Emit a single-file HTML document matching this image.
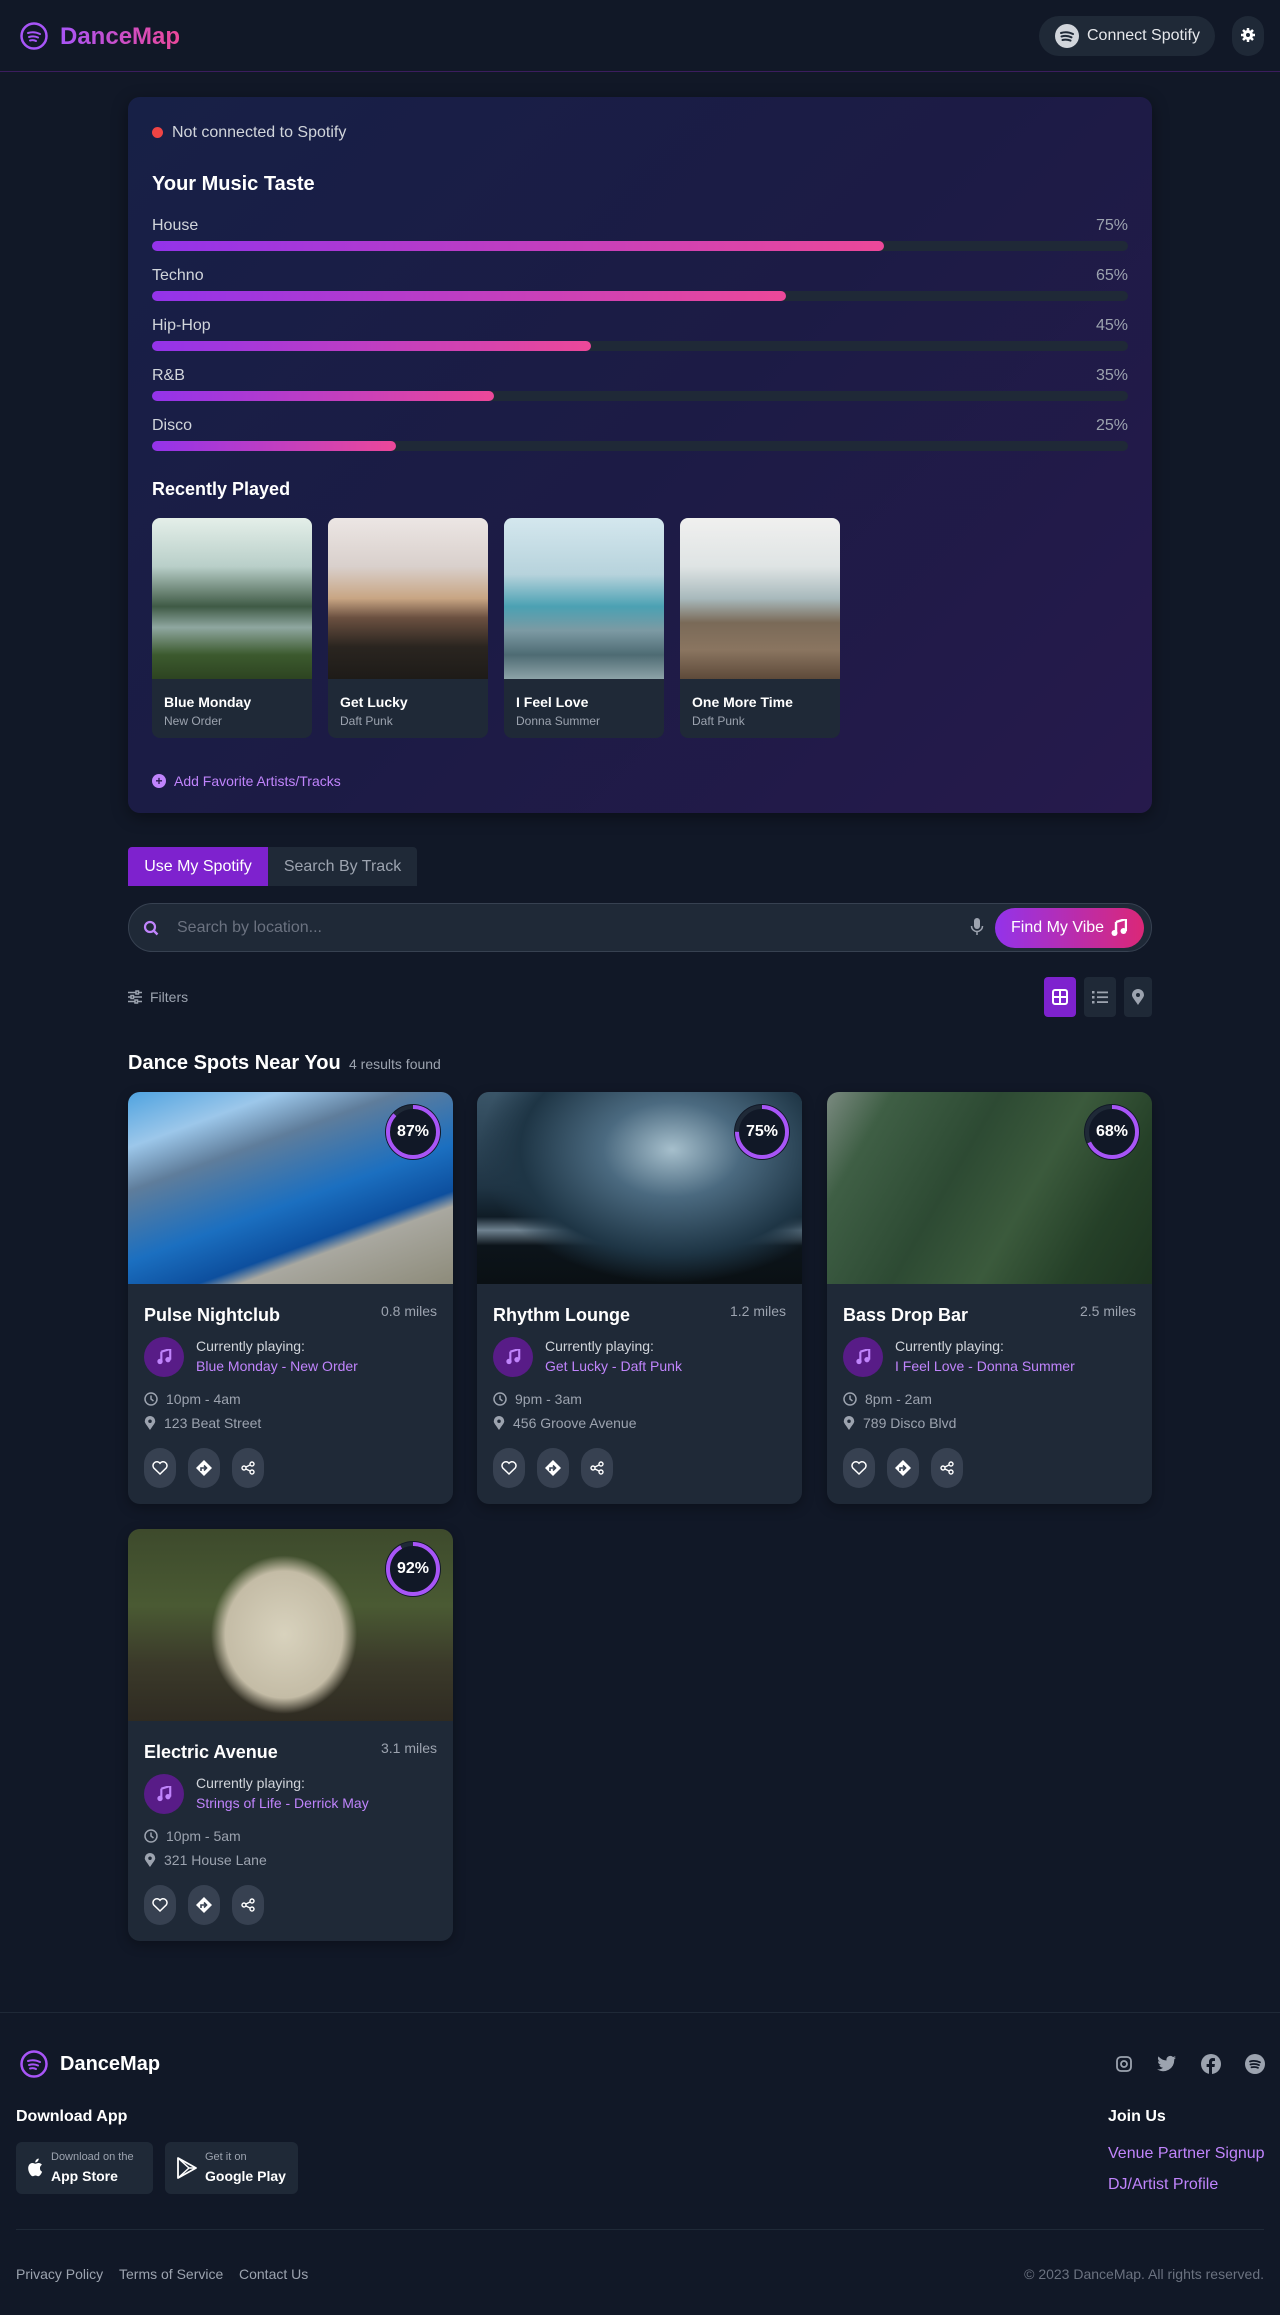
<!DOCTYPE html>
<html><head><meta charset="utf-8"><style>
*{box-sizing:border-box;margin:0;padding:0}
body{width:1280px;height:2315px;background:#111827;font-family:"Liberation Sans",sans-serif;color:#fff;position:relative;overflow:hidden}
.abs{position:absolute}
.hdr{left:0;top:0;width:1280px;height:72px;border-bottom:1px solid #3b1d5e;background:#111827}
.panel{left:128px;top:97px;width:1024px;height:716px;border-radius:12px;background:linear-gradient(135deg,#172046 0%,#1c1b45 50%,#261a4c 100%);box-shadow:0 4px 16px rgba(0,0,0,.4)}
.lbl{font-size:16px;color:#d1d5db}
.pct{font-size:16px;color:#9ca3af;right:24px}
.track{left:24px;width:976px;height:10px;border-radius:5px;background:#1f2937}
.fill{height:10px;border-radius:5px;background:linear-gradient(90deg,#9333ea,#ec4899)}
.tc{width:160px;height:220px;border-radius:8px;background:#1f2937;overflow:hidden;top:421px}
.tc .im{height:161px}
.tc b{position:absolute;left:12px;top:176px;font-size:14px}
.tc span{position:absolute;left:12px;top:196px;font-size:12px;color:#9ca3af}
.card{width:325px;height:412px;border-radius:12px;background:#1f2937;overflow:hidden;box-shadow:0 4px 12px rgba(0,0,0,.3)}
.card .im{height:192px;position:relative}
.ring{position:absolute;right:12px;top:12px;width:56px;height:56px;border-radius:50%;background:#111827;display:flex;align-items:center;justify-content:center;font-weight:bold;font-size:16px}
.ring svg{position:absolute;left:0;top:0}
.card h3{position:absolute;left:16px;top:213px;font-size:18px}
.mi{position:absolute;right:16px;top:211px;font-size:14px;color:#9ca3af}
.mc{position:absolute;left:16px;top:245px;width:40px;height:40px;border-radius:50%;background:#581c87;display:flex;align-items:center;justify-content:center}
.cp{position:absolute;left:68px;top:246px;font-size:14px;color:#d1d5db}
.sg{position:absolute;left:68px;top:266px;font-size:14px;color:#c084fc}
.ln{position:absolute;left:16px;font-size:14px;color:#9ca3af;display:flex;align-items:center;gap:8px}
.bt{position:absolute;top:356px;width:32px;height:40px;border-radius:16px;background:#374151;display:flex;align-items:center;justify-content:center}
.vb{top:977px;width:32px;height:40px;border-radius:4px;background:#1f2937;display:flex;align-items:center;justify-content:center}
</style></head><body>
<div class="abs hdr">
 <svg class="abs" style="left:19px;top:21px" width="30" height="30" viewBox="0 0 30 30"><circle cx="15" cy="15" r="12.5" fill="none" stroke="#a855f7" stroke-width="2.5"/><path d="M9 12q6-2 12 1M10 16q5-1.5 9 .5M11 19.5q3.5-1 6 .5" stroke="#a855f7" stroke-width="2" fill="none" stroke-linecap="round"/></svg>
 <div class="abs" style="left:60px;top:23px;font-size:24px;font-weight:bold;background:linear-gradient(90deg,#a855f7,#ec4899);-webkit-background-clip:text;color:transparent">DanceMap</div>
 <div class="abs" style="left:1039px;top:16px;width:176px;height:40px;border-radius:20px;background:#1f2937"></div>
 <svg class="abs" style="left:1055px;top:24px" width="24" height="24" viewBox="0 0 24 24"><circle cx="12" cy="12" r="12" fill="#d1d5db"/><path d="M6 9q6-2 12 1M6.5 12.5q5-1.5 10 .8M7.5 16q4-1 8 .6" stroke="#1f2937" stroke-width="2" fill="none" stroke-linecap="round"/></svg>
 <div class="abs" style="left:1087px;top:27px;font-size:16px;color:#e5e7eb">Connect Spotify</div>
 <div class="abs" style="left:1232px;top:16px;width:32px;height:40px;border-radius:16px;background:#1f2937"></div>
 <svg class="abs" style="left:1240px;top:27px" width="16" height="16" viewBox="0 0 16 16"><circle cx="8" cy="8" r="5" fill="#fff"/><g stroke="#fff" stroke-width="2.5"><path d="M8 1v14M1 8h14M3 3l10 10M13 3L3 13"/></g><circle cx="8" cy="8" r="2" fill="#1f2937"/></svg>
</div>

<div class="abs panel">
 <div class="abs" style="left:24px;top:30px;width:11px;height:11px;border-radius:50%;background:#ef4444"></div>
 <div class="abs" style="left:44px;top:27px;font-size:16px;color:#d1d5db">Not connected to Spotify</div>
 <div class="abs" style="left:24px;top:76px;font-size:20px;font-weight:bold">Your Music Taste</div>
 <div class="abs lbl" style="left:24px;top:120px">House</div><div class="abs pct" style="top:120px">75%</div>
 <div class="abs track" style="top:144px"><div class="fill" style="width:75%"></div></div>
 <div class="abs lbl" style="left:24px;top:170px">Techno</div><div class="abs pct" style="top:170px">65%</div>
 <div class="abs track" style="top:194px"><div class="fill" style="width:65%"></div></div>
 <div class="abs lbl" style="left:24px;top:220px">Hip-Hop</div><div class="abs pct" style="top:220px">45%</div>
 <div class="abs track" style="top:244px"><div class="fill" style="width:45%"></div></div>
 <div class="abs lbl" style="left:24px;top:270px">R&amp;B</div><div class="abs pct" style="top:270px">35%</div>
 <div class="abs track" style="top:294px"><div class="fill" style="width:35%"></div></div>
 <div class="abs lbl" style="left:24px;top:320px">Disco</div><div class="abs pct" style="top:320px">25%</div>
 <div class="abs track" style="top:344px"><div class="fill" style="width:25%"></div></div>
 <div class="abs" style="left:24px;top:382px;font-size:18px;font-weight:bold">Recently Played</div>
 <div class="abs tc" style="left:24px"><div class="im" style="background:linear-gradient(180deg,#e4efe9 0%,#b9cfc9 30%,#3f5a45 55%,#8fa7a0 68%,#3c5a2e 85%,#2d4421 100%)"></div><b>Blue Monday</b><span>New Order</span></div>
 <div class="abs tc" style="left:200px"><div class="im" style="background:linear-gradient(180deg,#ece6e4 0%,#d9d0cc 30%,#c8a583 50%,#6b5040 62%,#2a2520 80%,#1e1b18 100%)"></div><b>Get Lucky</b><span>Daft Punk</span></div>
 <div class="abs tc" style="left:376px"><div class="im" style="background:linear-gradient(180deg,#d4e7ee 0%,#b7d3dc 35%,#4ba1b3 55%,#7c9aa3 70%,#4e6b73 85%,#8da3a8 100%)"></div><b>I Feel Love</b><span>Donna Summer</span></div>
 <div class="abs tc" style="left:552px"><div class="im" style="background:linear-gradient(180deg,#f0f0ef 0%,#dfe4e4 30%,#a8b9bc 50%,#7a6a58 65%,#8a7560 82%,#5e4a3a 100%)"></div><b>One More Time</b><span>Daft Punk</span></div>
 <div class="abs" style="left:24px;top:677px;width:14px;height:14px;border-radius:50%;background:#c084fc;color:#261a4c;font-size:12px;line-height:14px;text-align:center;font-weight:bold">+</div>
 <div class="abs" style="left:46px;top:676px;font-size:14px;color:#c084fc">Add Favorite Artists/Tracks</div>
</div>

<div class="abs" style="left:128px;top:847px;width:140px;height:39px;background:#7e22ce;border-radius:4px 0 0 0;font-size:16px;text-align:center;line-height:39px">Use My Spotify</div>
<div class="abs" style="left:268px;top:847px;width:149px;height:39px;background:#1f2937;border-radius:0 4px 0 0;font-size:16px;color:#9ca3af;text-align:center;line-height:39px">Search By Track</div>

<div class="abs" style="left:128px;top:903px;width:1024px;height:49px;border-radius:25px;background:#1f2937;border:1px solid #374151"></div>
<svg class="abs" style="left:143px;top:920px" width="16" height="16" viewBox="0 0 16 16"><circle cx="7" cy="7" r="5" fill="none" stroke="#c084fc" stroke-width="2.2"/><path d="M10.5 10.5L14.5 14.5" stroke="#c084fc" stroke-width="2.4"/></svg>
<div class="abs" style="left:177px;top:919px;font-size:16px;color:#6b7280">Search by location...</div>
<svg class="abs" style="left:970px;top:918px" width="14" height="18" viewBox="0 0 14 18"><rect x="4" y="0" width="6" height="11" rx="3" fill="#9ca3af"/><path d="M1.5 8a5.5 5.5 0 0011 0M7 13.5V17" stroke="#9ca3af" stroke-width="1.5" fill="none"/></svg>
<div class="abs" style="left:995px;top:908px;width:149px;height:40px;border-radius:20px;background:linear-gradient(90deg,#9333ea,#db2777);font-size:16px;line-height:40px;padding-left:16px">Find My Vibe</div>
<svg class="abs" style="left:1111px;top:919px" width="16" height="18" viewBox="0 0 16 18"><path d="M5 3l10-3v12" stroke="#fff" stroke-width="2.4" fill="none"/><circle cx="3.5" cy="14" r="3" fill="#fff"/><circle cx="12.5" cy="12" r="3" fill="#fff"/><path d="M5 3v11" stroke="#fff" stroke-width="2.4"/></svg>

<svg class="abs" style="left:128px;top:990px" width="14" height="14" viewBox="0 0 14 14" stroke="#9ca3af" stroke-width="1.5"><path d="M0 2.5h14M0 7h14M0 11.5h14"/><rect x="8" y="1" width="2.5" height="3" fill="#111827"/><rect x="3" y="5.5" width="2.5" height="3" fill="#111827"/><rect x="7" y="10" width="2.5" height="3" fill="#111827"/></svg>
<div class="abs" style="left:150px;top:989px;font-size:14px;color:#9ca3af">Filters</div>
<div class="abs vb" style="left:1044px;background:#7e22ce"><svg width="16" height="16" viewBox="0 0 16 16"><rect x="1" y="1" width="14" height="14" rx="2" fill="none" stroke="#fff" stroke-width="2"/><path d="M8 1v14M1 8h14" stroke="#fff" stroke-width="2"/></svg></div>
<div class="abs vb" style="left:1084px"><svg width="16" height="14" viewBox="0 0 16 14" fill="#9ca3af"><rect x="0" y="1" width="2.5" height="2.5"/><rect x="0" y="6" width="2.5" height="2.5"/><rect x="0" y="11" width="2.5" height="2.5"/><rect x="5" y="1.5" width="11" height="1.8"/><rect x="5" y="6.3" width="11" height="1.8"/><rect x="5" y="11.2" width="11" height="1.8"/></svg></div>
<div class="abs vb" style="left:1124px;width:28px"><svg width="12" height="16" viewBox="0 0 12 16"><path d="M6 16C2 10 0 8 0 6a6 6 0 0112 0c0 2-2 4-6 10z" fill="#9ca3af"/><circle cx="6" cy="6" r="2" fill="#1f2937"/></svg></div>

<div class="abs" style="left:128px;top:1052px;font-size:20px;font-weight:bold">Dance Spots Near You</div>
<div class="abs" style="left:349px;top:1056px;font-size:14px;color:#9ca3af">4 results found</div>

<div class="abs card" style="left:128px;top:1092px">
 <div class="im" style="background:linear-gradient(160deg,#4fa3e0 0%,#9cc7ea 18%,#5f7d9b 32%,#1b6fc0 55%,#0d4f9e 70%,#a9a8a0 75%,#8d8b7a 100%)"><div class="ring"><svg width="56" height="56"><circle cx="28" cy="28" r="25" stroke="#1f2937" stroke-width="4" fill="none"/><circle cx="28" cy="28" r="25" stroke="#a855f7" stroke-width="4" fill="none" stroke-dasharray="136.6 157" transform="rotate(-90 28 28)"/></svg><span style="position:relative">87%</span></div></div>
 <h3>Pulse Nightclub</h3><div class="mi">0.8 miles</div>
 <div class="mc"><svg width="16" height="16" viewBox="0 0 16 18"><path d="M5 3l10-3v12M5 3v11" stroke="#c084fc" stroke-width="2.4" fill="none"/><circle cx="3.5" cy="14" r="3" fill="#c084fc"/><circle cx="12.5" cy="12" r="3" fill="#c084fc"/></svg></div>
 <div class="cp">Currently playing:</div><div class="sg">Blue Monday - New Order</div>
 <div class="ln" style="top:299px"><svg width="14" height="14"><circle cx="7" cy="7" r="6" stroke="#9ca3af" stroke-width="1.5" fill="none"/><path d="M7 3.5V7l2.5 2" stroke="#9ca3af" stroke-width="1.5" fill="none"/></svg>10pm - 4am</div>
 <div class="ln" style="top:323px"><svg width="12" height="14" viewBox="0 0 12 16"><path d="M6 16C2 10 0 8 0 6a6 6 0 0112 0c0 2-2 4-6 10z" fill="#9ca3af"/><circle cx="6" cy="6" r="2" fill="#1f2937"/></svg>123 Beat Street</div>
 <div class="bt" style="left:16px"><svg width="16" height="14" viewBox="0 0 16 14"><path d="M8 13L1.8 7A3.8 3.8 0 018 2.3 3.8 3.8 0 0114.2 7z" stroke="#fff" stroke-width="1.5" fill="none"/></svg></div>
 <div class="bt" style="left:60px"><svg width="16" height="16" viewBox="0 0 16 16"><path d="M8 0l8 8-8 8-8-8z" fill="#fff"/><path d="M5 11V8h5M8 5.5L10.5 8 8 10.5" stroke="#374151" stroke-width="1.6" fill="none"/></svg></div>
 <div class="bt" style="left:104px"><svg width="14" height="14"><circle cx="11" cy="3" r="2" stroke="#fff" fill="none" stroke-width="1.4"/><circle cx="3" cy="7" r="2" stroke="#fff" fill="none" stroke-width="1.4"/><circle cx="11" cy="11" r="2" stroke="#fff" fill="none" stroke-width="1.4"/><path d="M5 6l4-2M5 8l4 2" stroke="#fff" stroke-width="1.4"/></svg></div>
</div>

<div class="abs card" style="left:477px;top:1092px">
 <div class="im" style="background:radial-gradient(ellipse at 60% 30%,#a6bfcc 0%,#4b6a80 25%,#1e3545 55%,transparent 70%),linear-gradient(180deg,#3a5568 0%,#1f3444 50%,#0f1c26 65%,#6f8290 72%,#0c141a 80%,#0a1014 100%)"><div class="ring"><svg width="56" height="56"><circle cx="28" cy="28" r="25" stroke="#1f2937" stroke-width="4" fill="none"/><circle cx="28" cy="28" r="25" stroke="#a855f7" stroke-width="4" fill="none" stroke-dasharray="117.8 157" transform="rotate(-90 28 28)"/></svg><span style="position:relative">75%</span></div></div>
 <h3>Rhythm Lounge</h3><div class="mi">1.2 miles</div>
 <div class="mc"><svg width="16" height="16" viewBox="0 0 16 18"><path d="M5 3l10-3v12M5 3v11" stroke="#c084fc" stroke-width="2.4" fill="none"/><circle cx="3.5" cy="14" r="3" fill="#c084fc"/><circle cx="12.5" cy="12" r="3" fill="#c084fc"/></svg></div>
 <div class="cp">Currently playing:</div><div class="sg">Get Lucky - Daft Punk</div>
 <div class="ln" style="top:299px"><svg width="14" height="14"><circle cx="7" cy="7" r="6" stroke="#9ca3af" stroke-width="1.5" fill="none"/><path d="M7 3.5V7l2.5 2" stroke="#9ca3af" stroke-width="1.5" fill="none"/></svg>9pm - 3am</div>
 <div class="ln" style="top:323px"><svg width="12" height="14" viewBox="0 0 12 16"><path d="M6 16C2 10 0 8 0 6a6 6 0 0112 0c0 2-2 4-6 10z" fill="#9ca3af"/><circle cx="6" cy="6" r="2" fill="#1f2937"/></svg>456 Groove Avenue</div>
 <div class="bt" style="left:16px"><svg width="16" height="14" viewBox="0 0 16 14"><path d="M8 13L1.8 7A3.8 3.8 0 018 2.3 3.8 3.8 0 0114.2 7z" stroke="#fff" stroke-width="1.5" fill="none"/></svg></div>
 <div class="bt" style="left:60px"><svg width="16" height="16" viewBox="0 0 16 16"><path d="M8 0l8 8-8 8-8-8z" fill="#fff"/><path d="M5 11V8h5M8 5.5L10.5 8 8 10.5" stroke="#374151" stroke-width="1.6" fill="none"/></svg></div>
 <div class="bt" style="left:104px"><svg width="14" height="14"><circle cx="11" cy="3" r="2" stroke="#fff" fill="none" stroke-width="1.4"/><circle cx="3" cy="7" r="2" stroke="#fff" fill="none" stroke-width="1.4"/><circle cx="11" cy="11" r="2" stroke="#fff" fill="none" stroke-width="1.4"/><path d="M5 6l4-2M5 8l4 2" stroke="#fff" stroke-width="1.4"/></svg></div>
</div>

<div class="abs card" style="left:827px;top:1092px">
 <div class="im" style="background:linear-gradient(120deg,#7a8a80 0%,#3f5f45 15%,#2d4a33 40%,#3b5a3c 60%,#254028 80%,#1d3320 100%)"><div class="ring"><svg width="56" height="56"><circle cx="28" cy="28" r="25" stroke="#1f2937" stroke-width="4" fill="none"/><circle cx="28" cy="28" r="25" stroke="#a855f7" stroke-width="4" fill="none" stroke-dasharray="106.8 157" transform="rotate(-90 28 28)"/></svg><span style="position:relative">68%</span></div></div>
 <h3>Bass Drop Bar</h3><div class="mi">2.5 miles</div>
 <div class="mc"><svg width="16" height="16" viewBox="0 0 16 18"><path d="M5 3l10-3v12M5 3v11" stroke="#c084fc" stroke-width="2.4" fill="none"/><circle cx="3.5" cy="14" r="3" fill="#c084fc"/><circle cx="12.5" cy="12" r="3" fill="#c084fc"/></svg></div>
 <div class="cp">Currently playing:</div><div class="sg">I Feel Love - Donna Summer</div>
 <div class="ln" style="top:299px"><svg width="14" height="14"><circle cx="7" cy="7" r="6" stroke="#9ca3af" stroke-width="1.5" fill="none"/><path d="M7 3.5V7l2.5 2" stroke="#9ca3af" stroke-width="1.5" fill="none"/></svg>8pm - 2am</div>
 <div class="ln" style="top:323px"><svg width="12" height="14" viewBox="0 0 12 16"><path d="M6 16C2 10 0 8 0 6a6 6 0 0112 0c0 2-2 4-6 10z" fill="#9ca3af"/><circle cx="6" cy="6" r="2" fill="#1f2937"/></svg>789 Disco Blvd</div>
 <div class="bt" style="left:16px"><svg width="16" height="14" viewBox="0 0 16 14"><path d="M8 13L1.8 7A3.8 3.8 0 018 2.3 3.8 3.8 0 0114.2 7z" stroke="#fff" stroke-width="1.5" fill="none"/></svg></div>
 <div class="bt" style="left:60px"><svg width="16" height="16" viewBox="0 0 16 16"><path d="M8 0l8 8-8 8-8-8z" fill="#fff"/><path d="M5 11V8h5M8 5.5L10.5 8 8 10.5" stroke="#374151" stroke-width="1.6" fill="none"/></svg></div>
 <div class="bt" style="left:104px"><svg width="14" height="14"><circle cx="11" cy="3" r="2" stroke="#fff" fill="none" stroke-width="1.4"/><circle cx="3" cy="7" r="2" stroke="#fff" fill="none" stroke-width="1.4"/><circle cx="11" cy="11" r="2" stroke="#fff" fill="none" stroke-width="1.4"/><path d="M5 6l4-2M5 8l4 2" stroke="#fff" stroke-width="1.4"/></svg></div>
</div>

<div class="abs card" style="left:128px;top:1529px">
 <div class="im" style="background:radial-gradient(ellipse 30% 55% at 48% 55%,#d8d2bd 0%,#c4bca6 60%,transparent 75%),linear-gradient(180deg,#3d4a2c 0%,#4a5a33 40%,#3b3a2a 70%,#2f2b22 100%)"><div class="ring"><svg width="56" height="56"><circle cx="28" cy="28" r="25" stroke="#1f2937" stroke-width="4" fill="none"/><circle cx="28" cy="28" r="25" stroke="#a855f7" stroke-width="4" fill="none" stroke-dasharray="144.5 157" transform="rotate(-90 28 28)"/></svg><span style="position:relative">92%</span></div></div>
 <h3>Electric Avenue</h3><div class="mi">3.1 miles</div>
 <div class="mc"><svg width="16" height="16" viewBox="0 0 16 18"><path d="M5 3l10-3v12M5 3v11" stroke="#c084fc" stroke-width="2.4" fill="none"/><circle cx="3.5" cy="14" r="3" fill="#c084fc"/><circle cx="12.5" cy="12" r="3" fill="#c084fc"/></svg></div>
 <div class="cp">Currently playing:</div><div class="sg">Strings of Life - Derrick May</div>
 <div class="ln" style="top:299px"><svg width="14" height="14"><circle cx="7" cy="7" r="6" stroke="#9ca3af" stroke-width="1.5" fill="none"/><path d="M7 3.5V7l2.5 2" stroke="#9ca3af" stroke-width="1.5" fill="none"/></svg>10pm - 5am</div>
 <div class="ln" style="top:323px"><svg width="12" height="14" viewBox="0 0 12 16"><path d="M6 16C2 10 0 8 0 6a6 6 0 0112 0c0 2-2 4-6 10z" fill="#9ca3af"/><circle cx="6" cy="6" r="2" fill="#1f2937"/></svg>321 House Lane</div>
 <div class="bt" style="left:16px"><svg width="16" height="14" viewBox="0 0 16 14"><path d="M8 13L1.8 7A3.8 3.8 0 018 2.3 3.8 3.8 0 0114.2 7z" stroke="#fff" stroke-width="1.5" fill="none"/></svg></div>
 <div class="bt" style="left:60px"><svg width="16" height="16" viewBox="0 0 16 16"><path d="M8 0l8 8-8 8-8-8z" fill="#fff"/><path d="M5 11V8h5M8 5.5L10.5 8 8 10.5" stroke="#374151" stroke-width="1.6" fill="none"/></svg></div>
 <div class="bt" style="left:104px"><svg width="14" height="14"><circle cx="11" cy="3" r="2" stroke="#fff" fill="none" stroke-width="1.4"/><circle cx="3" cy="7" r="2" stroke="#fff" fill="none" stroke-width="1.4"/><circle cx="11" cy="11" r="2" stroke="#fff" fill="none" stroke-width="1.4"/><path d="M5 6l4-2M5 8l4 2" stroke="#fff" stroke-width="1.4"/></svg></div>
</div>

<div class="abs" style="left:0;top:2012px;width:1280px;height:1px;background:#1f2937"></div>
<svg class="abs" style="left:19px;top:2049px" width="30" height="30" viewBox="0 0 30 30"><circle cx="15" cy="15" r="12.5" fill="none" stroke="#a855f7" stroke-width="2.5"/><path d="M9 12q6-2 12 1M10 16q5-1.5 9 .5M11 19.5q3.5-1 6 .5" stroke="#a855f7" stroke-width="2" fill="none" stroke-linecap="round"/></svg>
<div class="abs" style="left:60px;top:2053px;font-size:20px;font-weight:bold">DanceMap</div>
<svg class="abs" style="left:1115px;top:2055px" width="18" height="18" viewBox="0 0 18 18"><rect x="2" y="2" width="14" height="14" rx="4" stroke="#9ca3af" stroke-width="1.8" fill="none"/><circle cx="9" cy="9" r="3" stroke="#9ca3af" stroke-width="1.8" fill="none"/></svg>
<svg class="abs" style="left:1157px;top:2055px" width="20" height="18" viewBox="0 0 20 18"><path d="M19 2.5a7 7 0 01-2.2.7 3.8 3.8 0 001.7-2.2 8 8 0 01-2.5 1A3.9 3.9 0 009.5 5.5 11 11 0 011.5 1.4a3.9 3.9 0 001.2 5.2A4 4 0 011 6.1a3.9 3.9 0 003.1 3.8 4 4 0 01-1.8.1 3.9 3.9 0 003.7 2.7A7.8 7.8 0 010 14.3 11 11 0 0017.2 4.5 8 8 0 0019 2.5z" fill="#9ca3af"/></svg>
<svg class="abs" style="left:1201px;top:2054px" width="20" height="20" viewBox="0 0 20 20"><circle cx="10" cy="10" r="10" fill="#9ca3af"/><path d="M11 20v-7h2.5l.4-3H11V8.3c0-.8.3-1.3 1.4-1.3H14V4.3A18 18 0 0011.8 4C9.6 4 8 5.4 8 7.9V10H5.6v3H8v7z" fill="#111827"/></svg>
<svg class="abs" style="left:1245px;top:2054px" width="20" height="20" viewBox="0 0 20 20"><circle cx="10" cy="10" r="10" fill="#9ca3af"/><path d="M5 7.5q5-1.5 10 .8M5.5 10.5q4.5-1.2 8.5.6M6.5 13.3q3.5-.8 6.5.5" stroke="#111827" stroke-width="1.8" fill="none" stroke-linecap="round"/></svg>

<div class="abs" style="left:16px;top:2108px;font-size:16px;font-weight:bold">Download App</div>
<div class="abs" style="left:16px;top:2142px;width:137px;height:52px;border-radius:6px;background:#1f2937"></div>
<svg class="abs" style="left:27px;top:2158px" width="16" height="19" viewBox="0 0 16 19"><path d="M13 10c0-2.2 1.8-3.2 1.9-3.3A4 4 0 0011.7 5c-1.4-.1-2.6.8-3.3.8S6.7 5 5.5 5A4.3 4.3 0 001.9 7.2c-1.5 2.7-.4 6.600 1.1 8.8.7 1 1.6 2.2 2.7 2.2s1.5-.7 2.8-.7 1.7.7 2.8.7 1.9-1.1 2.6-2.1a9 9 0 001.2-2.4A3.7 3.7 0 0113 10zM10.8 3.3A3.6 3.6 0 0011.7.5a3.8 3.8 0 00-2.5 1.3 3.5 3.5 0 00-.9 2.7 3.2 3.2 0 002.5-1.2z" fill="#fff"/></svg>
<div class="abs" style="left:51px;top:2151px;font-size:11px;color:#9ca3af">Download on the</div>
<div class="abs" style="left:51px;top:2168px;font-size:14px;font-weight:bold">App Store</div>
<div class="abs" style="left:165px;top:2142px;width:133px;height:52px;border-radius:6px;background:#1f2937"></div>
<svg class="abs" style="left:177px;top:2157px" width="20" height="22" viewBox="0 0 20 22"><path d="M1 1l18 10L1 21z" stroke="#fff" stroke-width="1.8" fill="none" stroke-linejoin="round"/><path d="M1 1l11 10L1 21M12 11l7 0" stroke="#fff" stroke-width="1.5" fill="none"/></svg>
<div class="abs" style="left:205px;top:2151px;font-size:11px;color:#9ca3af">Get it on</div>
<div class="abs" style="left:205px;top:2168px;font-size:14px;font-weight:bold">Google Play</div>

<div class="abs" style="left:1108px;top:2108px;font-size:16px;font-weight:bold">Join Us</div>
<div class="abs" style="left:1108px;top:2145px;font-size:16px;color:#c084fc">Venue Partner Signup</div>
<div class="abs" style="left:1108px;top:2176px;font-size:16px;color:#c084fc">DJ/Artist Profile</div>

<div class="abs" style="left:16px;top:2229px;width:1248px;height:1px;background:#1f2937"></div>
<div class="abs" style="left:16px;top:2266px;font-size:14px;color:#9ca3af">Privacy Policy</div>
<div class="abs" style="left:119px;top:2266px;font-size:14px;color:#9ca3af">Terms of Service</div>
<div class="abs" style="left:239px;top:2266px;font-size:14px;color:#9ca3af">Contact Us</div>
<div class="abs" style="right:16px;top:2266px;font-size:14px;color:#6b7280">© 2023 DanceMap. All rights reserved.</div>
</body></html>
